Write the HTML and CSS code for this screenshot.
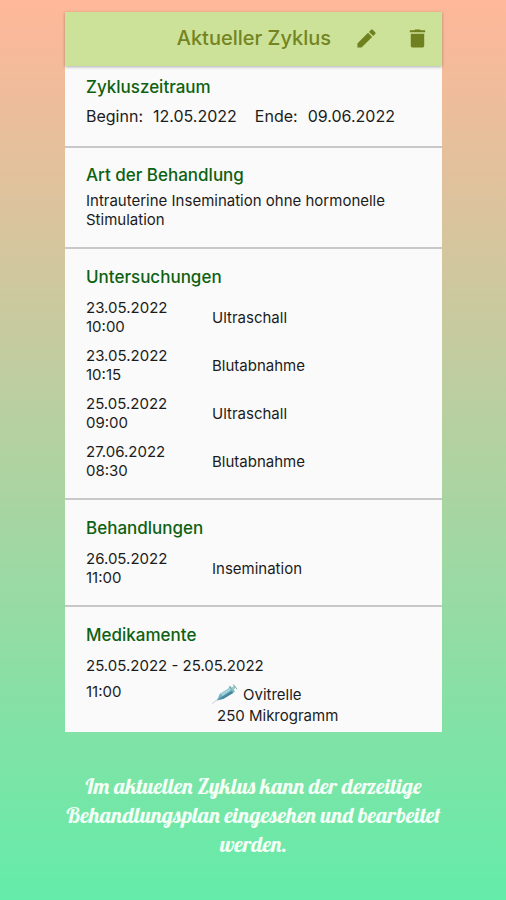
FILE: index.html
```html
<!DOCTYPE html>
<html lang="de">
<head>
  <meta charset="UTF-8">
  <meta name="viewport" content="width=device-width, initial-scale=1.0">
  <title>Aktueller Zyklus</title>
  <link rel="stylesheet" href="styles.css">
</head>
<body>

<main class="card">
  <header class="app-bar">
    <h1>Aktueller Zyklus</h1>
    <button class="icon-button" type="button" aria-label="Bearbeiten">
      <svg viewBox="0 0 24 24"><path d="M2.500 17.200V21.500h4.300L17.900 10.400l-4.300-4.300L2.500 17.200zM21.100 7.200c.5-.5.5-1.200 0-1.700l-2.600-2.600c-.5-.5-1.200-.5-1.700 0l-2.200 2.200 4.300 4.300L21.100 7.200z"/></svg>
    </button>
    <button class="icon-button" type="button" aria-label="Löschen">
      <svg viewBox="0 0 24 24"><path d="M5 19.500c0 1.100.9 2 2 2h10c1.100 0 2-.9 2-2V7H5v12.500zM20 3.500h-4.500l-1-1h-5l-1 1H4v2h16v-2z"/></svg>
    </button>
  </header>

  <section class="section period">
    <h2>Zykluszeitraum</h2>
    <dl class="dates">
      <dt>Beginn:</dt>
      <dd>12.05.2022</dd>
      <dt>Ende:</dt>
      <dd>09.06.2022</dd>
    </dl>
  </section>

  <section class="section treatment">
    <h2>Art der Behandlung</h2>
    <p>Intrauterine Insemination ohne hormonelle Stimulation</p>
  </section>

  <section class="section">
    <h2>Untersuchungen</h2>
    <ul class="list">
      <li class="entry"><time>23.05.2022<br>10:00</time><span>Ultraschall</span></li>
      <li class="entry"><time>23.05.2022<br>10:15</time><span>Blutabnahme</span></li>
      <li class="entry"><time>25.05.2022<br>09:00</time><span>Ultraschall</span></li>
      <li class="entry"><time>27.06.2022<br>08:30</time><span>Blutabnahme</span></li>
    </ul>
  </section>

  <section class="section">
    <h2>Behandlungen</h2>
    <ul class="list">
      <li class="entry"><time>26.05.2022<br>11:00</time><span>Insemination</span></li>
    </ul>
  </section>

  <section class="section medication">
    <h2>Medikamente</h2>
    <p class="range">25.05.2022 - 25.05.2022</p>
    <div class="entry dose">
      <time>11:00</time>
      <div>
        <p class="drug">
          <svg class="syringe" viewBox="0 0 28 22">
            <path d="M0 21L8 15" stroke="#c3cfd4" stroke-width="1"/>
            <path d="M5 18l3-7L19 4l4 5-11 7z" fill="#74b1c2"/>
            <path d="M9 11l10-7 2 2-10 7z" fill="#a3d3da"/>
            <path d="M6 17l6-1 10-6-2-2-10 6z" fill="#4b87a0"/>
            <path d="M18 3l5 6" stroke="#75b3b5" stroke-width="2"/>
            <path d="M21 6l3-3" stroke="#9ccaca" stroke-width="3"/>
            <path d="M22 1l4 5" stroke="#7fb0b2" stroke-width="1"/>
          </svg>
          Ovitrelle
        </p>
        <p class="amount">250 Mikrogramm</p>
      </div>
    </div>
  </section>
</main>

<p class="caption">Im aktuellen Zyklus kann der derzeitige Behandlungsplan eingesehen und bearbeitet werden.</p>

</body>
</html>
```

FILE: styles.css
```css
* {
  box-sizing: border-box;
}

body {
  margin: 0;
  min-height: 100vh;
  padding: 12px 64px 0 65px;
  background: linear-gradient(#ffb799, #64eca9);
  font-family: Inter, "Liberation Sans", sans-serif;
  font-size: 15px;
  line-height: 19px;
  color: #1c1c1c;
}

h1, h2, p, ul, dl, dd {
  margin: 0;
  padding: 0;
}

.card {
  background-color: #fafafa;
}

.app-bar {
  display: flex;
  align-items: center;
  justify-content: flex-end;
  height: 54px;
  padding: 0 13px 2px 0;
  background-color: #cce298;
  box-shadow: 0 1px 3px rgba(0, 0, 0, 0.3);
}

h1 {
  margin-right: 24px;
  font-size: 20px;
  font-weight: 500;
  line-height: 28px;
  color: #748423;
}

.icon-button {
  display: flex;
  width: 23px;
  height: 28px;
  padding: 0;
  border: 0;
  align-items: center;
  justify-content: center;
  background: none;
  color: #6f8020;
}

.icon-button + .icon-button {
  margin-left: 28px;
}

.icon-button svg {
  flex: none;
  width: 23px;
  height: 23px;
  fill: currentColor;
}

.section {
  padding: 16px 21px 17px;
  border-bottom: 2px solid #c8c8c8;
}

h2 {
  font-size: 17px;
  font-weight: 500;
  line-height: 24px;
  color: #0d6112;
}

.period {
  padding-top: 9px;
  padding-bottom: 20px;
}

.dates {
  display: flex;
  gap: 10px;
  margin-top: 8px;
  font-size: 16px;
}

.dates dd + dt {
  margin-left: 8px;
}

.treatment {
  padding-top: 15px;
  padding-bottom: 18px;
}

.treatment p {
  margin-top: 4px;
}

.list {
  display: grid;
  gap: 10px;
  margin-top: 9px;
  padding-bottom: 1px;
  list-style: none;
}

.entry {
  display: grid;
  grid-template-columns: 126px 1fr;
  align-items: center;
}

.medication {
  padding-bottom: 7px;
  border-bottom: 0;
}

.range {
  margin-top: 9px;
}

.dose {
  align-items: start;
  margin-top: 7px;
}

.drug {
  display: flex;
  align-items: center;
  gap: 4px;
  height: 24px;
}

.syringe {
  width: 27px;
  height: 22px;
  fill: none;
}

.amount {
  margin-left: 5px;
}

.caption {
  margin-top: 40px;
  font-family: Lobster, "Liberation Serif", serif;
  font-size: 22px;
  line-height: 29px;
  text-align: center;
  color: #f4fff6;
}
```
